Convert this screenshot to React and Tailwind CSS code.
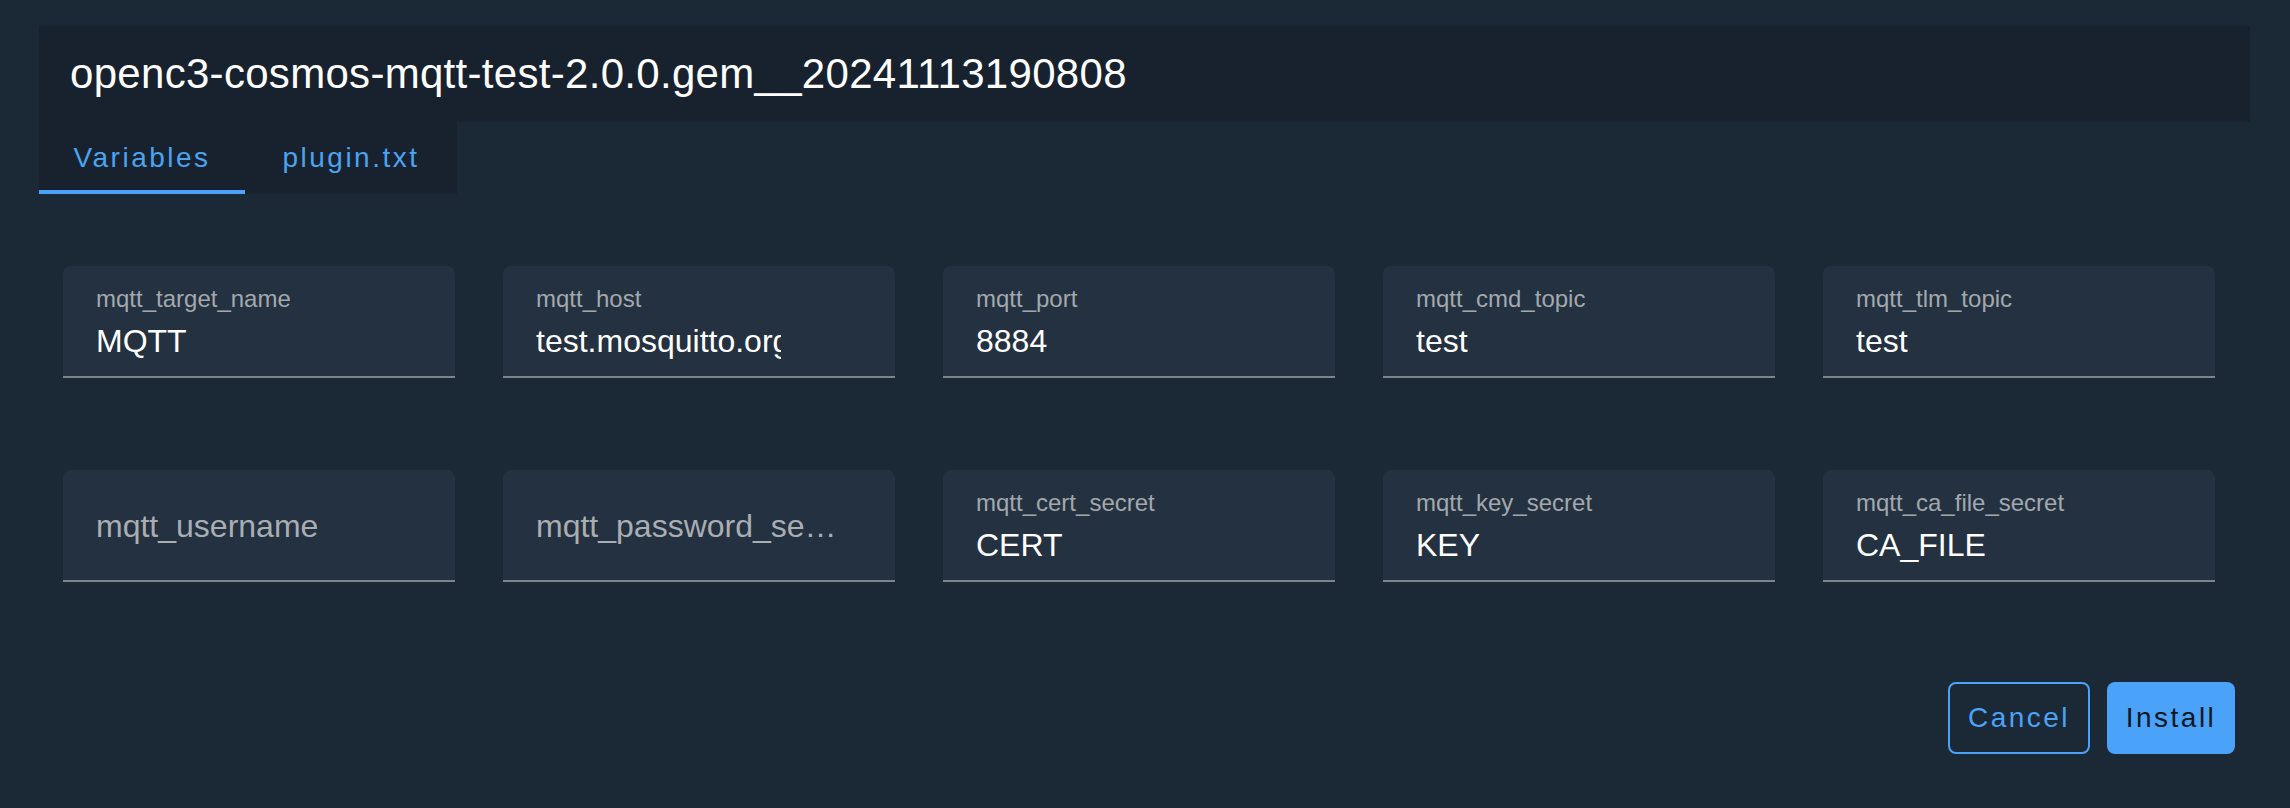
import React from 'react';

const font = { fontFamily: '"Liberation Sans", Arial, sans-serif' };

const rowOne = [
  { label: 'mqtt_target_name', value: 'MQTT' },
  { label: 'mqtt_host', value: 'test.mosquitto.org' },
  { label: 'mqtt_port', value: '8884' },
  { label: 'mqtt_cmd_topic', value: 'test' },
  { label: 'mqtt_tlm_topic', value: 'test' },
];

const rowTwo = [
  { label: 'mqtt_username', value: '' },
  { label: 'mqtt_password_secret', value: '' },
  { label: 'mqtt_cert_secret', value: 'CERT' },
  { label: 'mqtt_key_secret', value: 'KEY' },
  { label: 'mqtt_ca_file_secret', value: 'CA_FILE' },
];

const Field = ({ label, value }) => {
  // empty fields show the label as a placeholder in the middle
  if (!value) {
    return (
      <div className="w-[392px] h-[112px] rounded-t-[8px] bg-[#233140] border-b-2 border-[#7d858c] pl-[33px] pt-[36px]">
        <div className="max-w-[308px] truncate text-[32px] leading-[40px] text-[#a9aeb3]">{label}</div>
      </div>
    );
  }
  return (
    <div className="w-[392px] h-[112px] rounded-t-[8px] bg-[#233140] border-b-2 border-[#7d858c] pl-[33px] pt-[21px] flex flex-col">
      <div className="text-[24px] leading-[24px] text-[#a3a8ad] whitespace-nowrap">{label}</div>
      <input
        type="text"
        defaultValue={value}
        readOnly
        style={font}
        className="mt-[10px] w-[245px] h-[40px] bg-transparent text-[32px] leading-[40px] text-white outline-none p-0"
      />
    </div>
  );
};

export default function App() {
  return (
    <div style={font} className="min-h-[808px] bg-[#1b2836] pt-[26px]">
      <div className="ml-[39px] mr-[40px] h-[96px] bg-[#18222e] flex items-center pl-[31px]">
        <h2 className="text-[42px] tracking-[0.3px] leading-none text-white whitespace-nowrap">
          openc3-cosmos-mqtt-test-2.0.0.gem__20241113190808
        </h2>
      </div>

      <div className="ml-[39px] flex w-[418px] h-[72px] bg-[#18222e]">
        <button className="relative w-[206px] h-full flex items-center justify-center text-[28px] tracking-[2.5px] text-[#4ba3f1]">
          Variables
          <span className="absolute left-0 right-0 bottom-0 h-[4px] bg-[#4aa3f8]"></span>
        </button>
        <button className="w-[212px] h-full flex items-center justify-center text-[28px] tracking-[2.5px] text-[#4ba3f1]">
          plugin.txt
        </button>
      </div>

      <div className="pl-[63px] pt-[72px] flex flex-col gap-[92px]">
        <div className="flex gap-[48px]">
          {rowOne.map(f => <Field key={f.label} {...f} />)}
        </div>
        <div className="flex gap-[48px]">
          {rowTwo.map(f => <Field key={f.label} {...f} />)}
        </div>
      </div>

      <div className="flex justify-end gap-[17px] pr-[55px] pt-[100px]">
        <button className="w-[142px] h-[72px] rounded-[8px] border-2 border-[#4aa3f8] text-[28px] tracking-[2.5px] text-[#4aa3f8]">
          Cancel
        </button>
        <button className="w-[128px] h-[72px] rounded-[8px] bg-[#4aa3f8] text-[28px] tracking-[2.5px] text-[#0d1722]">
          Install
        </button>
      </div>
    </div>
  );
}
